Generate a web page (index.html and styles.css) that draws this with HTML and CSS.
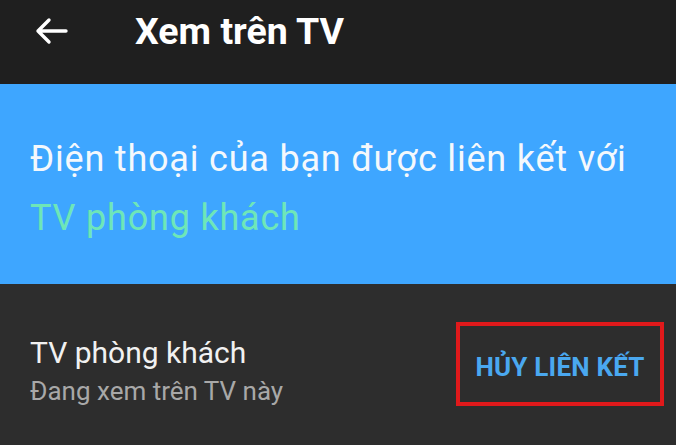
FILE: index.html
```html
<!DOCTYPE html>
<html lang="vi">
  <head>
    <meta charset="UTF-8" />
    <meta name="viewport" content="width=device-width, initial-scale=1.0" />
    <title>Xem trên TV</title>
    <link rel="stylesheet" href="styles.css">
  </head>
  <body>
    <div class="app">
      <header class="topbar">
        <button class="back" aria-label="Quay lại">
          <svg width="34" height="30" viewBox="0 0 34 30">
            <path d="M32 15H4M15 4L4 15l11 11" fill="none" stroke="#fff" stroke-width="3.4" stroke-linecap="round" stroke-linejoin="round"/>
          </svg>
        </button>
        <h1 class="title">Xem trên TV</h1>
      </header>

      <section class="banner">
        <p class="banner-text">Điện thoại của bạn được liên kết với</p>
        <p class="banner-device">TV phòng khách</p>
      </section>

      <section class="device-row">
        <div class="device-info">
          <div class="device-name">TV phòng khách</div>
          <div class="device-status">Đang xem trên TV này</div>
        </div>
        <button class="unlink">HỦY LIÊN KẾT</button>
      </section>
    </div>
  </body>
</html>
```

FILE: styles.css
```css
body {
  margin: 0;
  font-family: Roboto, "Noto Sans", sans-serif;
  background-color: #2d2d2d;
  color: white;
  overflow: hidden;
}

.app {
  height: 445px;
  display: flex;
  flex-direction: column;
}

/* Thanh tiêu đề */
.topbar {
  height: 84px;
  background-color: #1f1f1f;
  display: flex;
  align-items: center;
  padding-left: 34px;
  gap: 67px;
}

.back {
  background: none;
  border: none;
  padding: 0;
  display: flex;
  margin-top: -22px;
}

.title {
  margin: 0 0 22px;
  font-size: 37.5px;
  font-weight: 700;
}

/* Khối màu xanh */
.banner {
  height: 200px;
  background-color: #3ea6ff;
  box-sizing: border-box;
  padding: 46px 30px 0;
}

.banner p {
  margin: 0;
  font-size: 36px;
  line-height: 59px;
  letter-spacing: 0.8px;
}

.banner-text {
  color: #f4f8fc;
}

.banner-device {
  color: #6ee6b8;
}

/* Hàng thiết bị */
.device-row {
  flex: 1;
  background-color: #2d2d2d;
  display: flex;
  align-items: center;
  justify-content: space-between;
  padding: 0 12px 0 30px;
}

.device-info {
  margin-top: 12px;
}

.device-name {
  font-size: 30px;
  color: #f1f1f1;
  margin-bottom: 6px;
}

.device-status {
  font-size: 26px;
  color: #a8a8a8;
}

.unlink {
  background: none;
  border: 4px solid #e0191b;
  color: #4aa8f0;
  font-family: Roboto, sans-serif;
  font-weight: 700;
  font-size: 26px;
  letter-spacing: 0.2px;
  width: 208px;
  height: 84px;
  padding: 6px 0 0;
  margin-top: -2px;
}
```
